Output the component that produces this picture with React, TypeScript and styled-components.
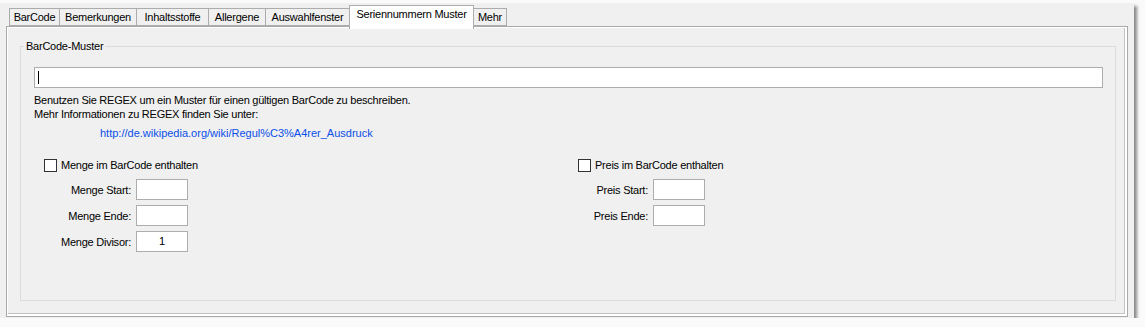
import { Fragment } from 'react'
import styled, { createGlobalStyle } from 'styled-components'

const GlobalStyle = createGlobalStyle`
  html, body {
    margin: 0;
    padding: 0;
    background: #fafafa;
  }
  body {
    font-family: 'Liberation Sans', Arial, sans-serif;
    font-size: 11px;
    letter-spacing: -0.24px;
    color: #000;
  }
`

const Window = styled.div`
  box-sizing: border-box;
  width: 1134px;
  height: 315px;
  margin-top: 3px;
  padding: 2px 6px 1px 6px;
  display: flex;
  flex-direction: column;
  background: #f0f0f0;
  box-shadow: 3px 3px 3px rgba(0, 0, 0, 0.45);
`

const TabStrip = styled.div`
  position: relative;
  z-index: 1;
  height: 21px;
  padding-left: 3px;
  display: flex;
  align-items: flex-end;
`

const Tab = styled.div<{ $width: number; $active?: boolean }>`
  box-sizing: border-box;
  width: ${(p) => p.$width + 1}px;
  height: ${(p) => (p.$active ? 24 : 18)}px;
  margin-left: -1px;
  margin-bottom: ${(p) => (p.$active ? -3 : 0)}px;
  padding-top: 2px;
  border: 1px solid #acacac;
  border-bottom: ${(p) => (p.$active ? 'none' : '1px solid #acacac')};
  background: ${(p) => (p.$active ? '#fff' : '#f0f0f0')};
  text-align: center;
  line-height: 13px;
  white-space: nowrap;
  &:first-child {
    margin-left: 0;
  }
`

const Panel = styled.div`
  flex: 1;
  display: flex;
  border: 1px solid #a9a9a9;
  background: #fff;
  padding: 1px 2px 2px 1px;
`

const Page = styled.div`
  flex: 1;
  display: flex;
  flex-direction: column;
  padding: 12px 8px 12px 12px;
  background: #f0f0f0;
  border-right: 1px solid #c2c2c2;
  border-bottom: 1px solid #c2c2c2;
`

const Group = styled.fieldset`
  flex: 1;
  margin: 0;
  padding: 15px 12px 0 13px;
  border: 1px solid #dcdcdc;
  min-width: 0;
`

const Legend = styled.legend`
  margin-left: -10px;
  padding: 0 2px;
  line-height: 12px;
`

const PatternInput = styled.div`
  box-sizing: border-box;
  height: 21px;
  display: flex;
  align-items: center;
  padding-left: 3px;
  border: 1px solid #adadad;
  background: #fff;
`

const Caret = styled.span`
  width: 1px;
  height: 13px;
  background: #000;
`

const HelpLine = styled.div<{ $indent?: number; $gap?: number }>`
  line-height: 14px;
  margin-top: ${(p) => p.$gap ?? 0}px;
  padding-left: ${(p) => p.$indent ?? 0}px;
`

const Link = styled.span`
  color: #0a4fe8;
  letter-spacing: 0;
`

const Columns = styled.div`
  display: grid;
  grid-template-columns: 534px 1fr;
  margin-top: 19px;
  padding-left: 10px;
`

const Column = styled.div`
  display: flex;
  flex-direction: column;
  gap: 7px;
`

const CheckRow = styled.label`
  display: flex;
  align-items: center;
  gap: 4px;
  height: 13px;
  line-height: 13px;
`

const Box = styled.span`
  box-sizing: border-box;
  width: 13px;
  height: 13px;
  border: 1px solid #333;
  background: #fff;
`

const Fields = styled.div<{ $labelWidth: number }>`
  display: grid;
  grid-template-columns: ${(p) => p.$labelWidth}px 52px;
  column-gap: 5px;
  row-gap: 5px;
  align-items: center;
`

const FieldLabel = styled.span`
  text-align: right;
  white-space: nowrap;
`

const SmallInput = styled.div`
  box-sizing: border-box;
  height: 21px;
  border: 1px solid #adadad;
  background: #fff;
  text-align: center;
  line-height: 19px;
`

const tabs = [
  { label: 'BarCode', width: 50 },
  { label: 'Bemerkungen', width: 77 },
  { label: 'Inhaltsstoffe', width: 72 },
  { label: 'Allergene', width: 57 },
  { label: 'Auswahlfenster', width: 84 },
  { label: 'Seriennummern Muster', width: 124, active: true },
  { label: 'Mehr', width: 33 },
]

type Field = { label: string; value?: string }

const mengeFields: Field[] = [
  { label: 'Menge Start:' },
  { label: 'Menge Ende:' },
  { label: 'Menge Divisor:', value: '1' },
]

const preisFields: Field[] = [{ label: 'Preis Start:' }, { label: 'Preis Ende:' }]

const FieldBlock = ({
  title,
  fields,
  labelWidth,
}: {
  title: string
  fields: Field[]
  labelWidth: number
}) => (
  <Column>
    <CheckRow>
      <Box />
      {title}
    </CheckRow>
    <Fields $labelWidth={labelWidth}>
      {fields.map((f) => (
        <Fragment key={f.label}>
          <FieldLabel>{f.label}</FieldLabel>
          <SmallInput>{f.value}</SmallInput>
        </Fragment>
      ))}
    </Fields>
  </Column>
)

export default function App() {
  return (
    <>
      <GlobalStyle />
      <Window>
        <TabStrip>
          {tabs.map((t) => (
            <Tab key={t.label} $width={t.width} $active={t.active}>
              {t.label}
            </Tab>
          ))}
        </TabStrip>
        <Panel>
          <Page>
            <Group>
              <Legend>BarCode-Muster</Legend>
              <PatternInput>
                <Caret />
              </PatternInput>
              <HelpLine $gap={5}>
                Benutzen Sie REGEX um ein Muster für einen gültigen BarCode zu beschreiben.
              </HelpLine>
              <HelpLine>Mehr Informationen zu REGEX finden Sie unter:</HelpLine>
              <HelpLine $gap={5} $indent={66}>
                <Link>http://de.wikipedia.org/wiki/Regul%C3%A4rer_Ausdruck</Link>
              </HelpLine>
              <Columns>
                <FieldBlock title="Menge im BarCode enthalten" fields={mengeFields} labelWidth={87} />
                <FieldBlock title="Preis im BarCode enthalten" fields={preisFields} labelWidth={70} />
              </Columns>
            </Group>
          </Page>
        </Panel>
      </Window>
    </>
  )
}
